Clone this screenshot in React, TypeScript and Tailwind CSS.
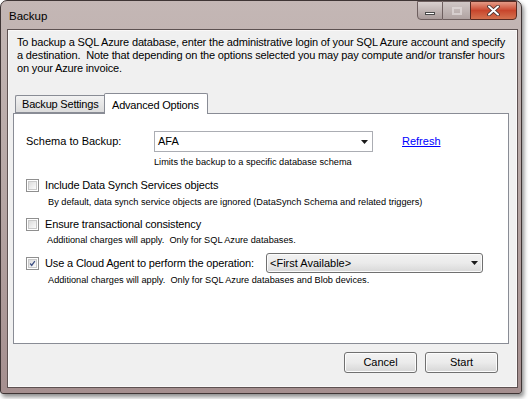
import React from 'react';

const Check: React.FC<{ checked?: boolean }> = ({ checked }) => (
  <div className="w-[13px] h-[13px] border border-[#8f8f8f] bg-white p-[1px] shrink-0">
    <div className="w-full h-full border border-[#c9c9c9] bg-gradient-to-br from-[#dcdcdc] to-[#fbfbfb] relative">
      {checked && (
        <svg viewBox="0 0 9 9" className="absolute inset-0 w-full h-full">
          <path d="M1.5 4.5 L3.5 7 L7.5 1.5" fill="none" stroke="#3c4e82" strokeWidth="1.6" />
        </svg>
      )}
    </div>
  </div>
);

const Arrow: React.FC = () => (
  <svg width="7" height="4" viewBox="0 0 7 4">
    <path d="M0 0 H7 L3.5 4 Z" fill="#1a1a1a" />
  </svg>
);

const Button: React.FC<{ label: string }> = ({ label }) => (
  <div className="w-[73px] h-[21px] rounded-[3px] border border-[#707070] bg-gradient-to-b from-[#f3f3f3] via-[#ebebeb] to-[#d6d6d6] flex items-center justify-center shadow-[inset_0_0_0_1px_#fcfcfc]">
    {label}
  </div>
);

export default function App() {
  return (
    <div className="w-[529px] h-[399px] bg-white overflow-hidden text-[11px] text-black" style={{ fontFamily: '"Liberation Sans", Arial, sans-serif' }}>
      <div className="w-[522px] h-[394px] rounded-t-[7px] rounded-b-[3px] border border-[#3f3535] bg-gradient-to-b from-[#c4b7b5] via-[#b6a6a4] to-[#a58f8f] shadow-[2px_3px_4px_rgba(0,0,0,0.45)] flex flex-col pl-[6px] pr-[3px] pb-[5px]">
        {/* title bar */}
        <div className="h-[28px] flex items-start">
          <div className="pl-[2px] pt-[8px] text-[11.5px] leading-[14px] flex-1">Backup</div>
          <div className="flex h-[19px] mr-[1px]">
            <div className="w-[26px] h-[19px] rounded-bl-[4px] border border-[#6e5f5f] bg-gradient-to-b from-[#d9d0cf] to-[#a99b9a] flex items-center justify-center">
              <div className="w-[10px] h-[3px] bg-white border border-[#4a4a4a] mt-[5px]" />
            </div>
            <div className="w-[27px] h-[19px] border-y border-[#6e5f5f] bg-gradient-to-b from-[#d0c7c6] to-[#b0a3a2] flex items-center justify-center">
              <div className="w-[10px] h-[8px] border-2 border-[#e3dcdc] opacity-70" />
            </div>
            <div className="w-[47px] h-[19px] rounded-br-[4px] border border-[#5a2a22] bg-gradient-to-b from-[#e39a86] via-[#c8452c] to-[#d4714f] flex items-center justify-center">
              <svg width="13" height="11" viewBox="0 0 13 11">
                <path d="M2 1.5 L11 9.5 M11 1.5 L2 9.5" stroke="#3b2b2b" strokeWidth="3.6" strokeLinecap="round" />
                <path d="M2 1.5 L11 9.5 M11 1.5 L2 9.5" stroke="#ffffff" strokeWidth="2" strokeLinecap="round" />
              </svg>
            </div>
          </div>
        </div>

        {/* client area */}
        <div className="flex-1 border border-[#5d5151] bg-[#f0f0f0] shadow-[inset_0_0_0_1px_#faf8f8] flex flex-col">
          <div className="pl-[9px] pt-[6px] leading-[13px] whitespace-nowrap tracking-[-0.15px]">
            <div>To backup a SQL Azure database, enter the administrative login of your SQL Azure account and specify</div>
            <div>a destination.&nbsp; Note that depending on the options selected you may pay compute and/or transfer hours</div>
            <div>on your Azure invoice.</div>
          </div>

          <div className="ml-[5px] mr-[8px] mt-[18px] flex flex-col">
            {/* tabs */}
            <div className="flex items-end h-[21px] relative z-10 -mb-px">
              <div className="ml-[2px] h-[18px] w-[89px] border border-[#898c95] border-r-0 rounded-tl-[2px] bg-gradient-to-b from-[#f2f2f2] to-[#dcdcdc] flex items-center pl-[6px] mb-px whitespace-nowrap tracking-[-0.2px]">
                Backup Settings
              </div>
              <div className="h-[21px] w-[104px] border border-[#898c95] border-b-0 rounded-t-[2px] bg-white flex items-start pt-[3px] pl-[7px] whitespace-nowrap tracking-[-0.2px]">
                Advanced Options
              </div>
            </div>
            {/* panel */}
            <div className="h-[231px] border border-[#898c95] bg-white flex flex-col whitespace-nowrap">
              <div className="flex items-center mt-[17px] h-[21px]">
                <div className="pl-[12px] w-[140px]">Schema to Backup:</div>
                <div className="w-[219px] h-[21px] border border-[#abadb3] bg-white flex items-center justify-between pl-[3px] pr-[4px]">
                  <span>AFA</span>
                  <Arrow />
                </div>
                <a className="ml-[29px] text-[#0000ff] underline">Refresh</a>
              </div>
              <div className="pl-[140px] mt-[4px] text-[9.2px] leading-[12px]">Limits the backup to a specific database schema</div>

              <div className="flex items-center gap-[6px] pl-[12px] mt-[9px] h-[16px] tracking-[-0.15px]">
                <Check />
                <span>Include Data Synch Services objects</span>
              </div>
              <div className="pl-[34px] mt-[3px] text-[9.2px] leading-[12px]">
                By default, data synch service objects are ignored (DataSynch Schema and related triggers)
              </div>

              <div className="flex items-center gap-[6px] pl-[12px] mt-[8px] h-[16px] tracking-[-0.15px]">
                <Check />
                <span>Ensure transactional consistency</span>
              </div>
              <div className="pl-[33px] mt-[2px] text-[9.2px] leading-[12px]">
                Additional charges will apply.&nbsp; Only for SQL Azure databases.
              </div>

              <div className="flex items-center pl-[12px] mt-[7px] h-[20px]">
                <Check checked />
                <span className="ml-[6px] w-[221px] tracking-[-0.15px]">Use a Cloud Agent to perform the operation:</span>
                <div className="w-[217px] h-[20px] rounded-[3px] border border-[#707070] bg-gradient-to-b from-[#f2f2f2] via-[#ebebeb] to-[#d8d8d8] flex items-center justify-between pl-[3px] pr-[4px] shadow-[inset_0_0_0_1px_#fbfbfb]">
                  <span>&lt;First Available&gt;</span>
                  <Arrow />
                </div>
              </div>
              <div className="pl-[34px] mt-[1px] text-[9.2px] leading-[12px]">
                Additional charges will apply.&nbsp; Only for SQL Azure databases and Blob devices.
              </div>
            </div>
          </div>

          <div className="flex justify-end gap-[8px] mt-[8px] mr-[19px]">
            <Button label="Cancel" />
            <Button label="Start" />
          </div>
        </div>
      </div>
    </div>
  );
}
